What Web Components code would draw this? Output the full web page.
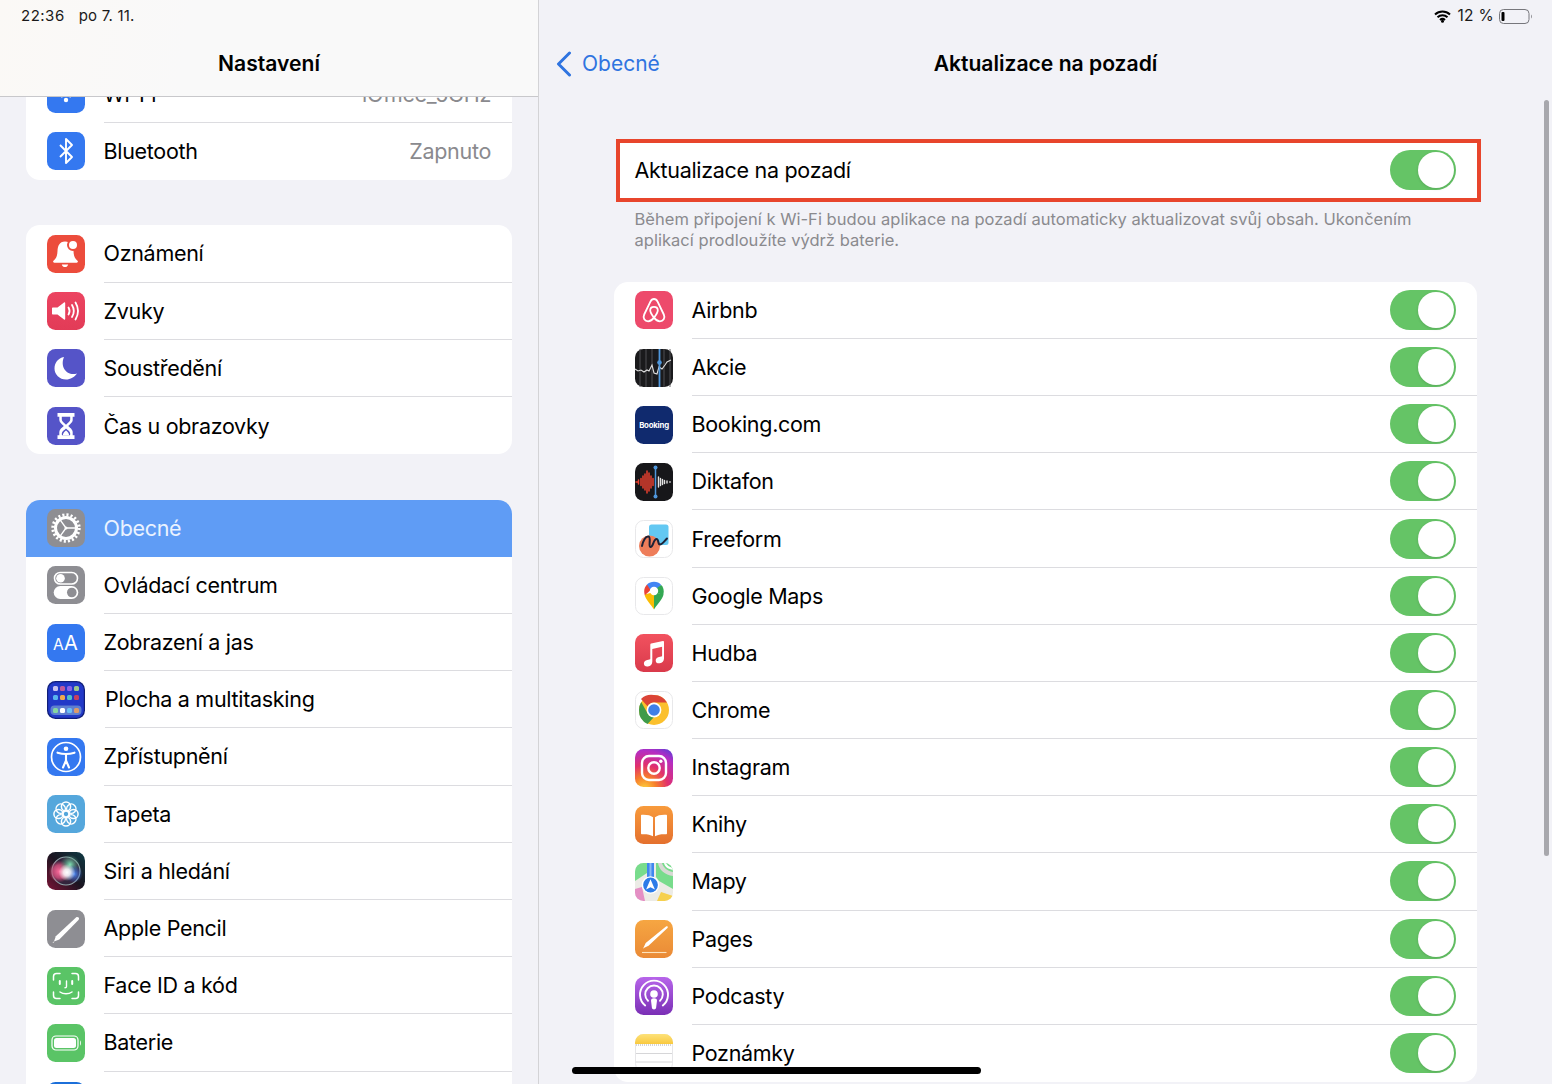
<!DOCTYPE html>
<html lang="cs">
<head>
<meta charset="utf-8">
<title>Aktualizace na pozadí</title>
<style>
  html, body { margin: 0; padding: 0; width: 1552px; height: 1084px; overflow: hidden; background: #f2f2f7; }
  body { font-family: Inter, "Liberation Sans", sans-serif; }
</style>
</head>
<body>
<settings-app>
  <settings-sidebar slot="side">
    <settings-group>
      <settings-row icon="wifi" label="Wi-Fi" value="iOffice_5GHz"></settings-row>
      <settings-row icon="bluetooth" label="Bluetooth" value="Zapnuto"></settings-row>
    </settings-group>
    <settings-group>
      <settings-row icon="bell" label="Oznámení"></settings-row>
      <settings-row icon="sound" label="Zvuky"></settings-row>
      <settings-row icon="moon" label="Soustředění"></settings-row>
      <settings-row icon="hourglass" label="Čas u obrazovky"></settings-row>
    </settings-group>
    <settings-group>
      <settings-row icon="gear" label="Obecné" selected></settings-row>
      <settings-row icon="control" label="Ovládací centrum"></settings-row>
      <settings-row icon="display" label="Zobrazení a jas"></settings-row>
      <settings-row icon="home" label="Plocha a multitasking" wide></settings-row>
      <settings-row icon="access" label="Zpřístupnění"></settings-row>
      <settings-row icon="wallpaper" label="Tapeta"></settings-row>
      <settings-row icon="siri" label="Siri a hledání"></settings-row>
      <settings-row icon="pencil" label="Apple Pencil"></settings-row>
      <settings-row icon="faceid" label="Face ID a kód"></settings-row>
      <settings-row icon="battery" label="Baterie"></settings-row>
      <settings-row icon="privacy"></settings-row>
    </settings-group>
  </settings-sidebar>
  <settings-detail slot="main">
    <focus-box>
      <settings-row label="Aktualizace na pozadí" toggle></settings-row>
    </focus-box>
    <group-note>Během připojení k Wi-Fi budou aplikace na pozadí automaticky aktualizovat svůj obsah. Ukončením aplikací prodloužíte výdrž baterie.</group-note>
    <settings-group class="apps">
      <settings-row icon="airbnb" label="Airbnb" toggle></settings-row>
      <settings-row icon="stocks" label="Akcie" toggle></settings-row>
      <settings-row icon="booking" label="Booking.com" toggle></settings-row>
      <settings-row icon="voice" label="Diktafon" toggle></settings-row>
      <settings-row icon="freeform" label="Freeform" toggle></settings-row>
      <settings-row icon="gmaps" label="Google Maps" toggle></settings-row>
      <settings-row icon="music" label="Hudba" toggle></settings-row>
      <settings-row icon="chrome" label="Chrome" toggle></settings-row>
      <settings-row icon="instagram" label="Instagram" toggle></settings-row>
      <settings-row icon="books" label="Knihy" toggle></settings-row>
      <settings-row icon="maps" label="Mapy" toggle></settings-row>
      <settings-row icon="pages" label="Pages" toggle></settings-row>
      <settings-row icon="podcasts" label="Podcasty" toggle></settings-row>
      <settings-row icon="notes" label="Poznámky" toggle></settings-row>
    </settings-group>
  </settings-detail>
</settings-app>

<script>
/* every icon sits on a 38x38 tile */
const tile = (fill, inner, extra = "") =>
  `<svg viewBox="0 0 38 38" width="38" height="38" xmlns="http://www.w3.org/2000/svg">${extra}<rect width="38" height="38" rx="8.5" fill="${fill}"/>${inner}</svg>`;

const vgrad = (id, a, b) =>
  `<defs><linearGradient id="${id}" x1="0" y1="0" x2="0" y2="1"><stop offset="0" stop-color="${a}"/><stop offset="1" stop-color="${b}"/></linearGradient></defs>`;

const petals = [0, 45, 90, 135, 180, 225, 270, 315]
  .map(a => `<circle cx="19" cy="11.5" r="4.6" transform="rotate(${a} 19 19)"/>`).join("");

const ICONS = {
  wifi: tile("#3478f0", `<g transform="translate(0 -4)"><path d="M7 15c7-6.5 17-6.5 24 0M11 20c4.8-4.5 11.2-4.5 16 0M15 25c2.400-2.2 5.600-2.2 8 0" fill="none" stroke="#fff" stroke-width="3" stroke-linecap="round"/><circle cx="19" cy="29" r="2.2" fill="#fff"/></g>`),
  bluetooth: tile("#3478f0", `<path d="M13 13l12 12-6 6V7l6 6-12 12" fill="none" stroke="#fff" stroke-width="1.9" stroke-linejoin="round"/>`),
  bell: tile("#ec4c3c", `<path d="M18 6.5c-5.600 0-7.300 4.600-7.500 9.500-.2 4.500-1 7.200-4 9.700-.8.700-.4 2 .8 2h22.400c1.200 0 1.600-1.300.8-2-3-2.500-3.800-5.200-4-9.700C26.300 11.100 23.600 6.500 18 6.500z" fill="#fff"/><path d="M14.800 29.500h6.400c-.5 1.700-1.700 2.600-3.200 2.600s-2.700-.9-3.200-2.600z" fill="#fff"/><circle cx="26" cy="10" r="5" fill="#fff" stroke="#ec4c3c" stroke-width="2"/>`),
  sound: tile("url(#g)", `<path d="M6 15.500h4.500L17 10.500c.6-.4 1.200-.1 1.200.6v15.800c0 .7-.6 1-1.200.6l-6.500-5H6c-.6 0-1-.4-1-1v-5c0-.6.4-1 1-1z" fill="#fff"/><path d="M21.500 15.500c1.400 2.300 1.400 4.700 0 7M25 13c2.300 3.800 2.300 8.200 0 12M28.500 10.500c3.200 5.400 3.200 11.600 0 17" fill="none" stroke="#fff" stroke-width="1.8" stroke-linecap="round"/>`, vgrad("g", "#ec4461", "#e23b57")),
  moon: tile("#5554c8", `<path d="M17 8C11 9 7.500 14 7.500 19.500 7.500 25.500 12.500 30.500 19 30.500c4.500 0 8.500-2.400 11-6-9.500 3-17.500-6-13-16.500z" fill="#fff"/>`),
  hourglass: tile("#5554c8", `<path d="M10.500 6h17v3.800h-1.800V13c0 2.600-2.900 4.400-4.500 6 1.600 1.600 4.500 3.400 4.500 6v3.200h1.800V32h-17v-3.800h1.800V25c0-2.600 2.900-4.400 4.500-6-1.600-1.600-4.500-3.400-4.500-6V9.800h-1.800z" fill="#fff"/><path d="M14.800 9.800h8.400v3c0 1.700-2.700 3.500-4.200 5-1.500-1.500-4.200-3.300-4.200-5zM19 21.500c1.700 1.500 4 3 4.200 5l-.1 1.700h-8.200l-.1-1.700c.2-2 2.500-3.500 4.200-5z" fill="#5554c8"/><path d="M15.800 28.200c.4-2.400 2-3.600 3.200-4.700 1.200 1.100 2.800 2.300 3.200 4.700z" fill="#fff"/>`),
  gear: tile("#8e8e93", `<circle cx="19" cy="19" r="13.2" fill="none" stroke="#fff" stroke-width="3" stroke-dasharray="2.1 2.05"/><circle cx="19" cy="19" r="10.5" fill="none" stroke="#fff" stroke-width="3"/><path d="M19 19l-5.500-7.600M19 19h9M19 19l-5.500 7.600" stroke="#fff" stroke-width="1.3" fill="none"/><circle cx="19" cy="19" r="1.5" fill="#fff"/>`),
  control: tile("#8e8e93", `<rect x="7.5" y="6.5" width="23" height="11.5" rx="5.75" fill="none" stroke="#fff" stroke-width="1.6"/><circle cx="13.5" cy="12.2" r="4.3" fill="#fff"/><rect x="6.700" y="20" width="24.600" height="13" rx="6.5" fill="#fff"/><circle cx="24.800" cy="26.5" r="4.800" fill="#8e8e93"/>`),
  display: tile("#3478f0", `<text x="6" y="26" font-family="Inter,sans-serif" font-size="15.5" fill="#fff">A</text><text x="17" y="26" font-family="Inter,sans-serif" font-size="20" fill="#fff">A</text>`),
  home: tile("#101e78", `<rect x="1.2" y="1.2" width="35.6" height="35.6" rx="7.5" fill="#2239c8"/><rect x="3.5" y="24.5" width="31" height="9.5" rx="4" fill="#5e7fd0"/><g>
    <rect x="6" y="5" width="5" height="5" rx="1.5" fill="#c8c2ee"/><rect x="13" y="5" width="5" height="5" rx="1.5" fill="#bd5a9c"/><rect x="20" y="5" width="5" height="5" rx="1.5" fill="#8b63e6"/><rect x="27" y="5" width="5" height="5" rx="1.5" fill="#9cc88c"/>
    <rect x="6" y="14" width="5" height="5" rx="1.5" fill="#58b4ef"/><rect x="13" y="14" width="5" height="5" rx="1.5" fill="#eea94f"/><rect x="20" y="14" width="5" height="5" rx="1.5" fill="#4fc0c4"/><rect x="27" y="14" width="5" height="5" rx="1.5" fill="#c9405e"/>
    <rect x="6" y="27" width="5" height="5" rx="1.5" fill="#86d6a0"/><rect x="13" y="27" width="5" height="5" rx="1.5" fill="#fff"/><rect x="20" y="27" width="5" height="5" rx="1.5" fill="#6cc0f4"/><rect x="27" y="27" width="5" height="5" rx="1.5" fill="#dc9a6a"/></g>`),
  access: tile("#3478f0", `<circle cx="19" cy="19" r="14.5" fill="none" stroke="#fff" stroke-width="1.7"/><circle cx="19" cy="10.8" r="2.3" fill="#fff"/><path d="M10.500 14.700c3 .9 5.800 1.300 8.500 1.300s5.500-.4 8.500-1.300M19 16v6.500M19 22.500l-3 7M19 22.500l3 7" fill="none" stroke="#fff" stroke-width="2.1" stroke-linecap="round"/>`),
  wallpaper: tile("#55a7dc", `<g fill="none" stroke="#fff" stroke-width="1.5">${petals}<circle cx="19" cy="19" r="3.2"/></g>`),
  siri: tile("url(#r)", `<circle cx="19" cy="19" r="14" fill="#33243c" stroke="#8fa3a8" stroke-width="1.2"/><circle cx="12.500" cy="19.500" r="11" fill="url(#p)"/><circle cx="23" cy="12.500" r="10" fill="url(#gr)"/><circle cx="27" cy="22" r="9" fill="url(#b)"/><circle cx="20" cy="20.500" r="8.500" fill="url(#w)"/>`,
    `<defs><linearGradient id="r" x1="0" y1="1" x2="1" y2="0"><stop offset="0" stop-color="#7a1436"/><stop offset=".5" stop-color="#1a1420"/><stop offset="1" stop-color="#0f3a44"/></linearGradient>
    <radialGradient id="p"><stop offset="0" stop-color="#ff6f9f"/><stop offset=".6" stop-color="#d8507f" stop-opacity=".8"/><stop offset="1" stop-color="#c2406c" stop-opacity="0"/></radialGradient>
    <radialGradient id="gr"><stop offset="0" stop-color="#7fe0b4"/><stop offset="1" stop-color="#4fa080" stop-opacity="0"/></radialGradient>
    <radialGradient id="b"><stop offset="0" stop-color="#4d8cf5"/><stop offset="1" stop-color="#3060d0" stop-opacity="0"/></radialGradient>
    <radialGradient id="w"><stop offset="0" stop-color="#fff"/><stop offset=".4" stop-color="#fff" stop-opacity=".85"/><stop offset="1" stop-color="#fff" stop-opacity="0"/></radialGradient></defs>`),
  pencil: tile("#8e8e93", `<path d="M29 7.500c.9-.7 2-.5 2.600.1.600.7.600 1.700-.1 2.500L12.300 29.500l-5.300 2 1.800-5.200z" fill="#fff"/><path d="M5.500 33l1-1.500.7.700z" fill="#fff"/>`),
  faceid: tile("#5ac466", `<path d="M6.500 13V9.500c0-1.700 1.300-3 3-3H13M25 6.500h3.500c1.700 0 3 1.300 3 3V13M31.500 25v3.500c0 1.700-1.300 3-3 3H25M13 31.500H9.500c-1.700 0-3-1.300-3-3V25" fill="none" stroke="#fff" stroke-width="1.5" stroke-linecap="round"/><path d="M12.800 14v3M25.200 14v3" stroke="#fff" stroke-width="2" stroke-linecap="round"/><path d="M19.500 14v5.500c0 .9-.6 1.300-1.500 1.300" fill="none" stroke="#fff" stroke-width="1.4" stroke-linecap="round"/><path d="M13 25c3.300 2.400 8.700 2.400 12 0" fill="none" stroke="#fff" stroke-width="1.5" stroke-linecap="round"/>`),
  battery: tile("#5ac466", `<rect x="5" y="12" width="26" height="14" rx="4" fill="none" stroke="#fff" stroke-width="1.2"/><rect x="7" y="14" width="22" height="10" rx="2.5" fill="#fff"/><path d="M33 16.500c1.200.4 1.200 4.600 0 5z" fill="#fff"/>`),
  privacy: tile("#1c6fd9", ""),
  airbnb: tile("#ed4a6b", `<path d="M19 8c-1.700 0-2.800 1-3.600 2.600L9.200 23.500c-1.700 3.600.6 6.800 3.900 6.800 2.400 0 4.300-1.500 5.900-3.700 1.600 2.200 3.500 3.700 5.900 3.700 3.300 0 5.600-3.200 3.900-6.800L22.600 10.600C21.800 9 20.700 8 19 8zM19 26.600c-2.400-3-3.800-5.300-3.800-7.300 0-2.200 1.700-3.500 3.800-3.500s3.800 1.300 3.800 3.500c0 2-1.400 4.300-3.800 7.300z" fill="none" stroke="#fff" stroke-width="1.8" stroke-linejoin="round"/>`),
  stocks: tile("#1a1a1c", `<path d="M5 0v38M11 0v38M17 0v38M29 0v38M35 0v38" stroke="#55555a" stroke-width=".9"/><path d="M0 20l3 2 3-1 3 2 3-2 2 1 3-6 2 8 3 1 2-7 3 2 3-4 2-3 4-2" fill="none" stroke="#dedede" stroke-width="1.1"/><path d="M24.500 0v38" stroke="#4f97dc" stroke-width="1.8"/><circle cx="24.500" cy="13.500" r="2.3" fill="#4f97dc"/>`),
  booking: `<svg viewBox="0 0 38 38" width="38" height="38" xmlns="http://www.w3.org/2000/svg"><rect width="38" height="38" rx="8.5" fill="#102a6e"/><text x="19" y="22" text-anchor="middle" font-family="Inter,sans-serif" font-weight="700" font-size="7.8" letter-spacing="-.2" fill="#fff">Booking</text></svg>`,
  voice: tile("#17171a", `<path d="M1 19h2M3.500 17v4M6 15.500v7M8 13v12M10 11v16M12 8v22M14 10v18M16 13v12M18 15.500v7" stroke="#e8402f" stroke-width="1.5" stroke-linecap="round"/><path d="M23.500 14v10M25.500 15.500v7M27.500 16.500v5M29.500 17.500v3M32 18v2M35 18.700v.6" stroke="#e2e2e2" stroke-width="1.4" stroke-linecap="round"/><path d="M20.500 4v30" stroke="#4f97dc" stroke-width="1.5"/><circle cx="20.500" cy="4.500" r="2" fill="#4f97dc"/><circle cx="20.500" cy="33.500" r="2" fill="#4f97dc"/>`),
  freeform: tile("#fff", `<rect x=".5" y=".5" width="37" height="37" rx="8" fill="none" stroke="#e8e8ea"/><rect x="14" y="4.500" width="19.500" height="20.500" rx="2.5" fill="#63c8f2"/><circle cx="14.500" cy="26" r="10.500" fill="#ee7d5a"/><path d="M7 26c1-5 3.500-10 6.500-9.500 3 .8-.5 10 2 10.500 2.500.5 3-8 6-8 2.500 0 1 5.500 3.500 5.500 2 0 4-3 7-6" fill="none" stroke="#1d2136" stroke-width="2" stroke-linecap="round"/>`),
  gmaps: tile("#fff", `<rect x=".5" y=".5" width="37" height="37" rx="8" fill="none" stroke="#e8e8ea"/><path d="M19 32.500c-2-4-8.500-9.500-9.500-15L19 15z" fill="#fbbc04"/><path d="M19 32.500c2-4 8.500-9.500 9.500-15L19 15z" fill="#34a853"/><path d="M12 7.500c-1.700 1.700-2.800 4-2.800 6.500 0 1.500.1 2.800.7 4.200l8-7.200z" fill="#ea4335"/><path d="M12 7.500c1.800-1.700 4.300-2.700 7-2.700 3 0 5.500 1.200 7.200 3.200L18 17z" fill="#4285f4"/><path d="M26.200 8c1.600 1.700 2.500 3.800 2.500 6.200 0 1.500-.1 2.700-.7 4L18 14z" fill="#34a853"/><circle cx="19" cy="14" r="4.200" fill="#fff"/>`),
  music: tile("url(#g)", `<path d="M15 9.700l13-2.700c.7-.1 1 .3 1 1v16.500c0 2.700-1.700 4.300-4.300 4.800-2.400.4-4-.9-4-2.900 0-1.900 1.300-3 3.300-3.500l2.300-.5c.6-.1.800-.4.800-1V12.800l-9.800 2.100v12.600c0 2.900-1.800 4.500-4.400 5-2.400.4-4-.9-4-2.900 0-1.900 1.300-3 3.300-3.500l2.300-.5c.6-.2.800-.4.800-1V10.700c0-.6.200-.9.700-1z" fill="#fff"/>`, vgrad("g", "#f2525f", "#d93a4b")),
  chrome: tile("#fff", `<rect x=".5" y=".5" width="37" height="37" rx="8" fill="none" stroke="#e8e8ea"/><circle cx="19" cy="19" r="15" fill="#fbc02d"/><path d="M19 4a15 15 0 0 1 13 7.500H19a7.500 7.500 0 0 0-6.500 3.750L6 7.900A15 15 0 0 1 19 4z" fill="#db4437"/><path d="M4 19a15 15 0 0 1 2.200-8l6.300 11.200 6.500 3.800L12.500 33A15 15 0 0 1 4 19z" fill="#3f9b4a"/><circle cx="19" cy="19" r="7.4" fill="#fff"/><circle cx="19" cy="19" r="5.800" fill="#3f7fe8"/>`),
  instagram: tile("url(#ig)", `<rect x="7" y="7" width="24" height="24" rx="7" fill="none" stroke="#fff" stroke-width="2.4"/><circle cx="19" cy="19" r="5.700" fill="none" stroke="#fff" stroke-width="2.4"/><circle cx="25.800" cy="12.200" r="1.700" fill="#fff"/>`,
    `<defs><radialGradient id="ig" cx=".25" cy="1.050" r="1.250"><stop offset="0" stop-color="#fdd33f"/><stop offset=".25" stop-color="#f77f2b"/><stop offset=".5" stop-color="#e1306c"/><stop offset=".8" stop-color="#b52dc3"/><stop offset="1" stop-color="#5b3fd6"/></radialGradient></defs>`),
  books: tile("url(#g)", `<path d="M18 11.200c-2.500-2-6-2.700-11-2.500-.6 0-1 .4-1 1v17.500c0 .6.400 1 1 1 4.500-.2 8.500.3 11 2.100zM20 11.200c2.500-2 6-2.700 11-2.500.6 0 1 .4 1 1v17.500c0 .6-.4 1-1 1-4.500-.2-8.500.3-11 2.100z" fill="#fff"/>`, vgrad("g", "#f89b3c", "#e4702e")),
  maps: `<svg viewBox="0 0 38 38" width="38" height="38" xmlns="http://www.w3.org/2000/svg"><defs><clipPath id="c"><rect width="38" height="38" rx="8.5"/></clipPath></defs><g clip-path="url(#c)"><rect width="38" height="38" fill="#ecebe6"/><path d="M0 0h12v10L0 18z" fill="#78dc8c"/><path d="M21 0h17v26L24 18l-3-4z" fill="#78dc8c"/><path d="M27 0c1 4 5 8 11 9v4C30 12 24 7 23 0z" fill="#d8d8d4"/><path d="M31 0c1 2 3 4 7 5v2C33 6 30 4 29 0z" fill="#fff"/><path d="M0 26l7-2 3 14H0z" fill="#e48fc4"/><path d="M22 38l4-9 12 4v5z" fill="#f6d04d"/><path d="M12 0h7v20h-7z" fill="#3f87ee"/><path d="M14.500 0h2v14h-2z" fill="#8ab8f6"/></g><circle cx="15.500" cy="22" r="8.800" fill="#fff"/><circle cx="15.500" cy="22" r="7.400" fill="#2c7be8"/><path d="M15.500 16.200l4.400 10.300-4.400-2.300-4.400 2.300z" fill="#fff"/></svg>`,
  pages: tile("url(#g)", `<path d="M31 6.500c.6-.5 1.300-.3 1.600.1.400.5.300 1-.1 1.500L13.500 25.800l-4.200 2-1.300.9.700-1.400 2-4.200z" fill="#fff"/><path d="M7 32.500h24.500" stroke="#fde2bb" stroke-width="1.1"/>`, vgrad("g", "#f6a642", "#ea8a36")),
  podcasts: tile("url(#g)", `<g fill="none" stroke="#fff" stroke-width="1.9" stroke-linecap="round"><path d="M10.200 28.500a14 14 0 1 1 17.600 0"/><path d="M13 23.800a8.800 8.800 0 1 1 12 0"/></g><circle cx="19" cy="17" r="3.800" fill="#fff"/><path d="M16 23.500c0-1.500 1.300-2.300 3-2.300s3 .8 3 2.300l-.9 7.300c-.2 1.300-1 1.700-2.100 1.700s-1.900-.4-2.100-1.700z" fill="#fff"/>`, vgrad("g", "#b765ea", "#7a2fb5")),
  notes: `<svg viewBox="0 0 38 38" width="38" height="38" xmlns="http://www.w3.org/2000/svg"><defs><linearGradient id="n" x1="0" y1="0" x2="0" y2="1"><stop offset="0" stop-color="#fde27a"/><stop offset="1" stop-color="#f9c93e"/></linearGradient></defs><rect x=".5" y=".5" width="37" height="37" rx="8" fill="#fff" stroke="#e6e6e8"/><path d="M0 10V8.500A8.500 8.500 0 0 1 8.500 0h21A8.500 8.500 0 0 1 38 8.500V10z" fill="url(#n)"/><path d="M1 11h36" stroke="#aaa" stroke-width="1" stroke-dasharray="1 1"/><path d="M1 19.500h36M1 28h36" stroke="#d6d6d8"/></svg>`
};

class SettingsApp extends HTMLElement {
  constructor() {
    super();
    this.attachShadow({ mode: "open" }).innerHTML = /*html*/ `
      <style>
        :host { display: grid; grid-template-columns: 539px 1fr; width: 1552px; height: 1084px; position: relative; overflow: hidden; background: #f2f2f7; }
        .home-bar { position: absolute; left: 572px; top: 1067px; width: 409px; height: 7px; border-radius: 4px; background: #000; }
      </style>
      <slot name="side"></slot>
      <slot name="main"></slot>
      <div class="home-bar"></div>`;
  }
}

class SettingsSidebar extends HTMLElement {
  constructor() {
    super();
    this.attachShadow({ mode: "open" }).innerHTML = /*html*/ `
      <style>
        :host { display: block; position: relative; height: 1084px; overflow: hidden; box-sizing: border-box; border-right: 1px solid #d3d3d6; --row-height: 57.2px; }
        .list { display: flex; flex-direction: column; gap: 45.5px; padding: 65.5px 26px 0; width: 486px; }
        header { position: absolute; left: 0; right: 0; top: 0; height: 97px; box-sizing: border-box; border-bottom: 1px solid #c8c8cb; background: linear-gradient(100deg, #fbf9f6, #f9f9f9 35%); }
        .clock { position: absolute; left: 21px; top: 7px; display: flex; gap: 14px; font-size: 15px; line-height: 18px; color: #1a1a1a; }
        .clock .time { letter-spacing: .5px; }
        .clock .date { letter-spacing: .2px; }
        h1 { margin: 0; position: absolute; left: 0; right: 0; top: 50px; text-align: center; font-size: 21.1px; line-height: 28px; font-weight: 600; color: #000; }
      </style>
      <div class="list"><slot></slot></div>
      <header>
        <div class="clock"><span class="time">22:36</span><span class="date">po 7. 11.</span></div>
        <h1>Nastavení</h1>
      </header>`;
  }
}

class SettingsDetail extends HTMLElement {
  constructor() {
    super();
    this.attachShadow({ mode: "open" }).innerHTML = /*html*/ `
      <style>
        :host { display: block; position: relative; height: 1084px; overflow: hidden; }
        nav { height: 96px; position: relative; }
        .back { position: absolute; left: 17px; top: 50px; display: flex; align-items: center; gap: 10px; color: #2f74e0; font-size: 21px; line-height: 28px; }
        h2 { margin: 0; position: absolute; left: 0; right: 0; top: 50px; text-align: center; font-size: 21.1px; line-height: 28px; font-weight: 600; color: #000; }
        .status { position: absolute; right: 19px; top: 7px; display: flex; align-items: center; gap: 6px; font-size: 15.5px; line-height: 18px; color: #1a1a1a; }
        .status span { letter-spacing: .3px; }
        .status .batt { margin-left: -1px; }
        .content { padding-top: 43px; }
        .scroll { position: absolute; left: 1005px; top: 100px; width: 5px; height: 756px; border-radius: 3px; background: #a8a8ad; }
        ::slotted(settings-group) { margin: 31.3px 0 0 75px; width: 863px; }
      </style>
      <nav>
        <div class="back">
          <svg width="16" height="26" viewBox="0 0 16 26"><path d="M13.500 2L2.500 13l11 11" fill="none" stroke="#2f74e0" stroke-width="3" stroke-linecap="round" stroke-linejoin="round"/></svg>
          <span>Obecné</span>
        </div>
        <h2>Aktualizace na pozadí</h2>
        <div class="status">
          <svg width="17" height="13" viewBox="0 0 17 13"><path d="M1 4.600c4.300-4 10.700-4 15 0M3.500 7.300c2.900-2.700 7.100-2.700 10 0M6 10c1.400-1.300 3.600-1.300 5 0" fill="none" stroke="#000" stroke-width="2"/><circle cx="8.500" cy="11.300" r="1.500" fill="#000"/></svg>
          <span>12 %</span>
          <svg class="batt" width="34" height="15" viewBox="0 0 34 15"><rect x=".5" y=".5" width="29.5" height="14" rx="4" fill="none" stroke="#77777c"/><rect x="2.5" y="3" width="3" height="9" rx="1" fill="#000"/><path d="M32 5.500c1 .4 1 3.600 0 4z" fill="#77777c"/></svg>
        </div>
      </nav>
      <div class="content"><slot></slot></div>
      <div class="scroll"></div>`;
  }
}

class SettingsGroup extends HTMLElement {
  constructor() {
    super();
    this.attachShadow({ mode: "open" }).innerHTML = /*html*/ `
      <style>
        :host { display: block; background: #fff; border-radius: 14px; overflow: hidden; }
      </style>
      <slot></slot>`;
  }
}

class FocusBox extends HTMLElement {
  constructor() {
    super();
    this.attachShadow({ mode: "open" }).innerHTML = /*html*/ `
      <style>
        :host { display: block; box-sizing: border-box; margin-left: 77px; width: 865px; height: 62.5px; border: 4.5px solid #e8452c; background: #fff; --row-height: 53.5px; --row-left: 14.5px; --row-right: 21px; }
      </style>
      <slot></slot>`;
  }
}

class GroupNote extends HTMLElement {
  constructor() {
    super();
    this.attachShadow({ mode: "open" }).innerHTML = /*html*/ `
      <style>
        :host { display: block; margin: 7px 0 0 95.5px; width: 800px; font-size: 16.5px; line-height: 21px; letter-spacing: .03px; color: #8a8a8e; }
      </style>
      <slot></slot>`;
  }
}

class IosSwitch extends HTMLElement {
  constructor() {
    super();
    this.attachShadow({ mode: "open" }).innerHTML = /*html*/ `
      <style>
        :host { display: block; flex: none; width: 66px; height: 40px; border-radius: 20px; background: #65c466; position: relative; }
        .knob { position: absolute; right: 2px; top: 2px; width: 36px; height: 36px; border-radius: 50%; background: #fff; box-shadow: 0 1px 3px #0002; }
      </style>
      <div class="knob"></div>`;
  }
}

class SettingsRow extends HTMLElement {
  constructor() {
    super();
    this.attachShadow({ mode: "open" });
  }

  connectedCallback() {
    const icon = ICONS[this.getAttribute("icon")];
    const value = this.getAttribute("value");
    this.shadowRoot.innerHTML = /*html*/ `
      <style>
        :host { display: flex; align-items: center; height: var(--row-height, 57.17px); padding-left: var(--row-left, 20.5px); color: #000; font-size: 21.5px; letter-spacing: -.3px; }
        .icon { flex: none; width: 38px; height: 38px; margin-right: 19px; }
        :host([wide]) .icon { margin-right: 20.5px; }
        :host([icon="privacy"]) .icon { margin-top: 2px; }
        .icon svg { display: block; }
        .body { flex: 1; min-width: 0; height: 100%; box-sizing: border-box; display: flex; align-items: center; justify-content: space-between; padding-right: var(--row-right, 21px); border-bottom: 1px solid #dcdce0; }
        :host(:last-child) .body { border-bottom: 0; }
        :host([selected]) { background: #5f9cf5; color: #eaf2ff; }
        :host([selected]) .body { border-bottom: 0; }
        .value { color: #8a8a8e; }
      </style>
      ${icon ? `<div class="icon">${icon}</div>` : ""}
      <div class="body">
        <span>${this.getAttribute("label") || ""}</span>
        ${value ? `<span class="value">${value}</span>` : ""}
        ${this.hasAttribute("toggle") ? "<ios-switch></ios-switch>" : ""}
      </div>`;
  }
}

customElements.define("settings-app", SettingsApp);
customElements.define("settings-sidebar", SettingsSidebar);
customElements.define("settings-detail", SettingsDetail);
customElements.define("settings-group", SettingsGroup);
customElements.define("focus-box", FocusBox);
customElements.define("group-note", GroupNote);
customElements.define("ios-switch", IosSwitch);
customElements.define("settings-row", SettingsRow);
</script>
</body>
</html>
